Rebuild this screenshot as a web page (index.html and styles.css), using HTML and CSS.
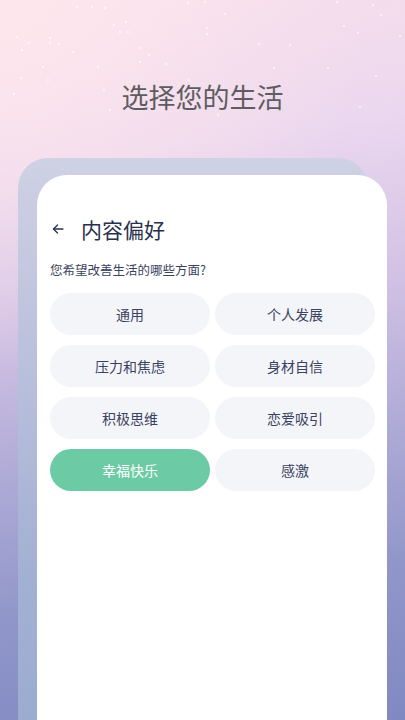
FILE: index.html
```html
<!DOCTYPE html>
<html lang="zh-CN">
  <head>
    <meta charset="UTF-8" />
    <meta name="viewport" content="width=device-width, initial-scale=1.0" />
    <title>选择您的生活</title>
    <link rel="stylesheet" href="styles.css">
  </head>
  <body>
    <div class="screen">
      <svg class="stars" width="405" height="130" viewBox="0 0 405 130" fill="#fff">
        <circle cx="77" cy="7" r="0.9"/><circle cx="92" cy="7" r="0.9"/><circle cx="105" cy="8" r="0.9"/>
        <circle cx="188" cy="3" r="0.9"/><circle cx="205" cy="2" r="0.9"/><circle cx="225" cy="14" r="0.9"/>
        <circle cx="114" cy="25" r="0.9"/><circle cx="126" cy="22" r="0.9"/><circle cx="120" cy="32" r="0.9"/>
        <circle cx="128" cy="32" r="0.9"/><circle cx="207" cy="28" r="0.9"/><circle cx="207" cy="34" r="0.9"/>
        <circle cx="259" cy="44" r="0.9"/><circle cx="290" cy="45" r="0.9"/><circle cx="344" cy="26" r="0.9"/>
        <circle cx="358" cy="33" r="0.9"/><circle cx="400" cy="36" r="0.9"/><circle cx="17" cy="37" r="0.9"/>
        <circle cx="29" cy="43" r="0.9"/><circle cx="50" cy="38" r="0.9"/><circle cx="50" cy="43" r="0.9"/>
        <circle cx="22" cy="50" r="0.9"/><circle cx="59" cy="44" r="0.9"/><circle cx="73" cy="52" r="0.9"/>
        <circle cx="140" cy="48" r="0.9"/><circle cx="149" cy="55" r="0.9"/><circle cx="140" cy="62" r="0.9"/>
        <circle cx="166" cy="64" r="0.9"/><circle cx="98" cy="67" r="0.9"/><circle cx="43" cy="67" r="0.9"/>
        <circle cx="48" cy="80" r="0.9"/><circle cx="21" cy="78" r="0.9"/><circle cx="14" cy="94" r="0.9"/>
        <circle cx="104" cy="90" r="0.9"/><circle cx="274" cy="68" r="0.9"/><circle cx="328" cy="68" r="0.9"/>
        <circle cx="376" cy="76" r="0.9"/><circle cx="360" cy="107" r="0.9"/><circle cx="110" cy="110" r="0.9"/>
        <circle cx="218" cy="115" r="0.9"/><circle cx="189" cy="80" r="0.9"/><circle cx="373" cy="5" r="0.9"/>
        <circle cx="337" cy="2" r="0.9"/><circle cx="381" cy="15" r="0.9"/>
      </svg>

      <h1 class="title">选择您的生活</h1>

      <div class="panel">
        <div class="card">
          <div class="header">
            <svg class="back" width="14" height="14" viewBox="0 0 14 14" fill="none" stroke="#2a3350" stroke-width="1.3" stroke-linecap="round" stroke-linejoin="round">
              <path d="M12 7H2.5"/>
              <path d="M6.5 3L2.5 7L6.5 11"/>
            </svg>
            <span class="header-title">内容偏好</span>
          </div>
          <p class="question">您希望改善生活的哪些方面?</p>
          <div class="chips">
            <div class="chip">通用</div>
            <div class="chip">个人发展</div>
            <div class="chip">压力和焦虑</div>
            <div class="chip">身材自信</div>
            <div class="chip">积极思维</div>
            <div class="chip">恋爱吸引</div>
            <div class="chip chip-selected">幸福快乐</div>
            <div class="chip">感激</div>
          </div>
        </div>
      </div>
    </div>
  </body>
</html>
```

FILE: styles.css
```css
html,
body {
  margin: 0;
  padding: 0;
}

body {
  font-family: "Noto Sans CJK SC", "Noto Sans", sans-serif;
  width: 405px;
  height: 720px;
  overflow: hidden;
}

.screen {
  position: relative;
  width: 405px;
  height: 720px;
  overflow: hidden;
  background:
    radial-gradient(circle at 0% 0%, rgba(255, 232, 236, 0.9) 0%, rgba(255, 232, 236, 0) 45%),
    linear-gradient(172deg, #f7e0ec 0%, #ebd7ef 22%, #d3c2e4 42%, #aeaad6 62%, #9096c9 80%, #8189c3 100%);
}

.stars {
  position: absolute;
  left: 0;
  top: 0;
  opacity: 0.9;
}

.title {
  position: relative;
  margin: 0;
  padding-top: 79px;
  height: 79px;
  line-height: 36px;
  text-align: center;
  font-size: 27px;
  font-weight: 400;
  color: #5d5d61;
}

.panel {
  margin-left: 18px;
  width: 350px;
  height: 600px;
  padding: 17px 0 0 19px;
  box-sizing: border-box;
  border-radius: 30px 30px 0 0;
  background: linear-gradient(to bottom, #cfd1e4 0%, #b9c0dc 35%, #a2b0d3 70%, #9aabd0 100%);
}

.card {
  width: 350px;
  height: 600px;
  padding: 39px 13px 0 13px;
  box-sizing: border-box;
  border-radius: 30px 30px 0 0;
  background-color: #ffffff;
}

.header {
  display: flex;
  align-items: center;
  height: 30px;
}

.back {
  margin-left: 1px;
  margin-right: 16px;
}

.header-title {
  font-size: 21px;
  color: #27304d;
  line-height: 30px;
}

.question {
  margin: 16px 0 0 0;
  font-size: 12.5px;
  line-height: 20px;
  color: #3b4260;
}

.chips {
  margin-top: 13px;
  display: grid;
  grid-template-columns: 160px 160px;
  column-gap: 5px;
  row-gap: 10px;
}

.chip {
  height: 42px;
  border-radius: 21px;
  background-color: #f4f5f8;
  color: #3a4262;
  font-size: 14px;
  display: flex;
  align-items: center;
  justify-content: center;
}

.chip-selected {
  background-color: #6ccba5;
  color: #ffffff;
}
```
